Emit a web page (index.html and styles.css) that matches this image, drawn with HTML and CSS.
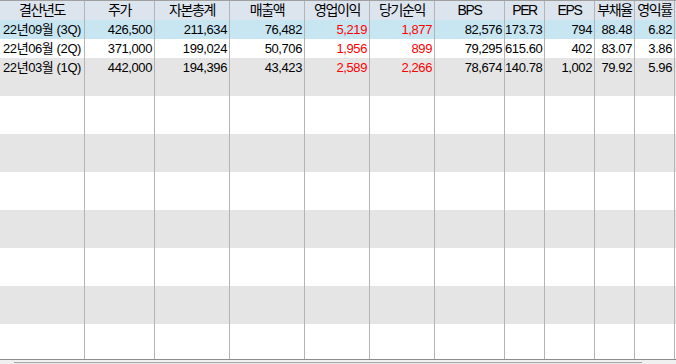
FILE: index.html
```html
<!DOCTYPE html>
<html lang="ko">
<head>
<meta charset="utf-8">
<link rel="stylesheet" href="styles.css">
</head>
<body>
<div class="grid">
  <div class="row head">
    <div class="c">결산년도</div><div class="c">주가</div><div class="c">자본총계</div><div class="c">매출액</div><div class="c">영업이익</div><div class="c">당기순익</div><div class="c">BPS</div><div class="c">PER</div><div class="c">EPS</div><div class="c">부채율</div><div class="c">영익률</div>
  </div>
  <div class="body">
    <div class="row sel">
      <div class="c first">22년09월 (3Q)</div><div class="c">426,500</div><div class="c">211,634</div><div class="c">76,482</div><div class="c red">5,219</div><div class="c red">1,877</div><div class="c">82,576</div><div class="c">173.73</div><div class="c">794</div><div class="c">88.48</div><div class="c">6.82</div>
    </div>
    <div class="row">
      <div class="c first">22년06월 (2Q)</div><div class="c">371,000</div><div class="c">199,024</div><div class="c">50,706</div><div class="c red">1,956</div><div class="c red">899</div><div class="c">79,295</div><div class="c">615.60</div><div class="c">402</div><div class="c">83.07</div><div class="c">3.86</div>
    </div>
    <div class="row alt">
      <div class="c first">22년03월 (1Q)</div><div class="c">442,000</div><div class="c">194,396</div><div class="c">43,423</div><div class="c red">2,589</div><div class="c red">2,266</div><div class="c">78,674</div><div class="c">140.78</div><div class="c">1,002</div><div class="c">79.92</div><div class="c">5.96</div>
    </div>
    <div class="row alt"><div class="c"></div><div class="c"></div><div class="c"></div><div class="c"></div><div class="c"></div><div class="c"></div><div class="c"></div><div class="c"></div><div class="c"></div><div class="c"></div><div class="c"></div></div>
    <div class="row"><div class="c"></div><div class="c"></div><div class="c"></div><div class="c"></div><div class="c"></div><div class="c"></div><div class="c"></div><div class="c"></div><div class="c"></div><div class="c"></div><div class="c"></div></div>
    <div class="row"><div class="c"></div><div class="c"></div><div class="c"></div><div class="c"></div><div class="c"></div><div class="c"></div><div class="c"></div><div class="c"></div><div class="c"></div><div class="c"></div><div class="c"></div></div>
    <div class="row alt"><div class="c"></div><div class="c"></div><div class="c"></div><div class="c"></div><div class="c"></div><div class="c"></div><div class="c"></div><div class="c"></div><div class="c"></div><div class="c"></div><div class="c"></div></div>
    <div class="row alt"><div class="c"></div><div class="c"></div><div class="c"></div><div class="c"></div><div class="c"></div><div class="c"></div><div class="c"></div><div class="c"></div><div class="c"></div><div class="c"></div><div class="c"></div></div>
    <div class="row"><div class="c"></div><div class="c"></div><div class="c"></div><div class="c"></div><div class="c"></div><div class="c"></div><div class="c"></div><div class="c"></div><div class="c"></div><div class="c"></div><div class="c"></div></div>
    <div class="row"><div class="c"></div><div class="c"></div><div class="c"></div><div class="c"></div><div class="c"></div><div class="c"></div><div class="c"></div><div class="c"></div><div class="c"></div><div class="c"></div><div class="c"></div></div>
    <div class="row alt"><div class="c"></div><div class="c"></div><div class="c"></div><div class="c"></div><div class="c"></div><div class="c"></div><div class="c"></div><div class="c"></div><div class="c"></div><div class="c"></div><div class="c"></div></div>
    <div class="row alt"><div class="c"></div><div class="c"></div><div class="c"></div><div class="c"></div><div class="c"></div><div class="c"></div><div class="c"></div><div class="c"></div><div class="c"></div><div class="c"></div><div class="c"></div></div>
    <div class="row"><div class="c"></div><div class="c"></div><div class="c"></div><div class="c"></div><div class="c"></div><div class="c"></div><div class="c"></div><div class="c"></div><div class="c"></div><div class="c"></div><div class="c"></div></div>
    <div class="row"><div class="c"></div><div class="c"></div><div class="c"></div><div class="c"></div><div class="c"></div><div class="c"></div><div class="c"></div><div class="c"></div><div class="c"></div><div class="c"></div><div class="c"></div></div>
    <div class="row alt"><div class="c"></div><div class="c"></div><div class="c"></div><div class="c"></div><div class="c"></div><div class="c"></div><div class="c"></div><div class="c"></div><div class="c"></div><div class="c"></div><div class="c"></div></div>
    <div class="row alt"><div class="c"></div><div class="c"></div><div class="c"></div><div class="c"></div><div class="c"></div><div class="c"></div><div class="c"></div><div class="c"></div><div class="c"></div><div class="c"></div><div class="c"></div></div>
    <div class="row"><div class="c"></div><div class="c"></div><div class="c"></div><div class="c"></div><div class="c"></div><div class="c"></div><div class="c"></div><div class="c"></div><div class="c"></div><div class="c"></div><div class="c"></div></div>
    <div class="row"><div class="c"></div><div class="c"></div><div class="c"></div><div class="c"></div><div class="c"></div><div class="c"></div><div class="c"></div><div class="c"></div><div class="c"></div><div class="c"></div><div class="c"></div></div>
  </div>
</div>
<div class="hscroll"><div class="thumb"></div></div>
</body>
</html>
```

FILE: styles.css
```css
html, body {
  margin: 0;
  padding: 0;
  background: #ffffff;
}
body {
  width: 676px;
  height: 364px;
  overflow: hidden;
  font-family: "Liberation Sans", "Noto Sans CJK KR", sans-serif;
  font-size: 13px;
  color: #000000;
}
.grid {
  border-top: 1px solid #a0a0a0;
  border-bottom: 1px solid #8c8c8c;
}
.row {
  display: grid;
  grid-template-columns: 85px 70px 75px 75px 65px 65px 70px 40px 50px 40px 40px 1px;
  height: 19px;
  line-height: 20px;
}
.c {
  border-right: 1px solid #b4b4b4;
  text-align: right;
  padding-right: 2px;
  white-space: nowrap;
  overflow: hidden;
  letter-spacing: -0.4px;
}
.head {
  background: #dce4ee;
  font-size: 14px;
  line-height: 19px;
}
.head .c {
  text-align: center;
  padding-right: 0;
  letter-spacing: -1.4px;
}
.body {
  height: 339px;
  overflow: hidden;
}
.sel {
  background: #c8e6f2;
}
.alt {
  background: #e5e5e5;
}
.first {
  text-align: center;
  padding-right: 0;
}
.red {
  color: #ff0000;
}
.hscroll {
  height: 3px;
  background: #f0f0f0;
  display: flex;
  padding-top: 2px;
}
.thumb {
  margin-left: 14px;
  width: 628px;
  border-top: 1px solid #a8a8a8;
  background: #e8e8e8;
}
```
